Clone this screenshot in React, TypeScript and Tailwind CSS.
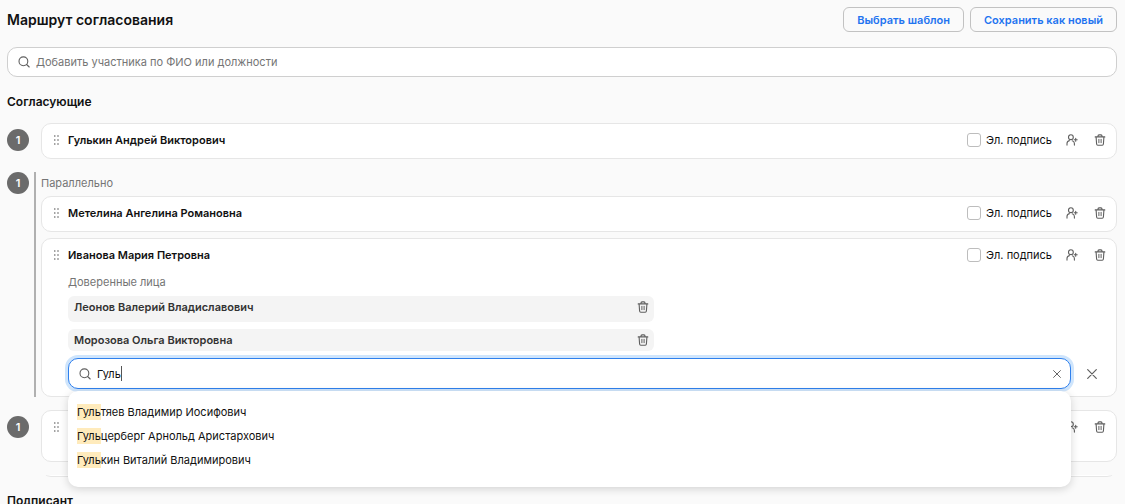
import { useState } from "react";
import type { ReactNode } from "react";

const delegates = ["Леонов Валерий Владиславович", "Морозова Ольга Викторовна"];

const people = [
  "Гультяев Владимир Иосифович",
  "Гульцерберг Арнольд Аристархович",
  "Гулькин Виталий Владимирович",
];

function SearchIcon() {
  return (
    <svg aria-hidden="true" className="h-3 w-3 shrink-0" fill="none" stroke="#5f5f5f" strokeLinecap="round" strokeWidth="1.1" viewBox="0 0 12 12">
      <circle cx="5.4" cy="5.3" r="4.4" />
      <path d="M8.6 8.5 11.2 11" />
    </svg>
  );
}

function TrashIcon() {
  return (
    <svg aria-hidden="true" className="h-3 w-3" fill="none" stroke="#5f5f5f" strokeLinecap="round" strokeLinejoin="round" strokeWidth="1.1" viewBox="0 0 12 12">
      <path d="M1.2 2.9h9.6M4 2.7V1.9Q4 .9 5 .9h2q1 0 1 1v.8M2.1 3.1l.5 6.9q.1 1.2 1.2 1.2h4.4q1.1 0 1.2-1.2l.5-6.9" />
      <path d="M4.9 5.3v3.4M7.1 5.3v3.4" strokeWidth="1" />
    </svg>
  );
}

function UserPlusIcon() {
  return (
    <svg aria-hidden="true" className="h-3 w-3" fill="none" stroke="#5f5f5f" strokeLinecap="round" strokeLinejoin="round" strokeWidth="1.1" viewBox="0 0 12 12">
      <circle cx="4.9" cy="3.2" r="2.4" />
      <path d="M1 11.1V9.5Q1 7.1 3.4 6.6M6.3 6.8Q8.4 7.4 8.4 9.5v1.6M8.2 5.8h3M9.7 4.3v3" />
    </svg>
  );
}

function CrossIcon({ className }: { className: string }) {
  return (
    <svg aria-hidden="true" className={className} fill="none" stroke="#5f5f5f" strokeLinecap="round" strokeWidth="1.2" viewBox="0 0 10 10">
      <path d="m.7.7 8.6 8.6M9.3.7.7 9.3" />
    </svg>
  );
}

function DragHandle() {
  return (
    <svg aria-hidden="true" className="h-[10px] w-[5px] shrink-0" fill="#5f5f5f" viewBox="0 0 5 10">
      {[1, 5, 9].map((y) => (
        <g key={y}>
          <circle cx="0.8" cy={y} r="0.8" />
          <circle cx="4" cy={y} r="0.8" />
        </g>
      ))}
    </svg>
  );
}

function StepBadge({ children }: { children: ReactNode }) {
  return (
    <span className="grid h-[22px] w-[22px] shrink-0 place-items-center rounded-full bg-[#6b6b6b] text-[11px] font-semibold text-white">
      {children}
    </span>
  );
}

function ParticipantCard({ name, children }: { name?: string; children?: ReactNode }) {
  return (
    <article className="min-w-0 flex-1 rounded-[10px] border border-[#e6e6e6] bg-white pb-[2px]">
      <div className="flex h-8 items-center pl-3 pr-[10px]">
        <DragHandle />
        <h3 className="ml-[9px] flex-1 text-[11px] font-semibold">{name}</h3>
        <label className="flex items-center gap-[5px]">
          <input className="h-[14px] w-[14px] appearance-none rounded-[3px] border border-[#bdbdbd] bg-white checked:bg-[#1f74f0]" type="checkbox" />
          Эл. подпись
        </label>
        <button aria-label="Добавить доверенное лицо" className="ml-[14px]" type="button">
          <UserPlusIcon />
        </button>
        <button aria-label="Удалить участника" className="ml-4" type="button">
          <TrashIcon />
        </button>
      </div>
      {children}
    </article>
  );
}

function DelegateSearch() {
  const [query, setQuery] = useState("Гуль");
  const matches = people.filter((person) => query !== "" && person.startsWith(query));

  return (
    <div className="mt-[7px] flex items-center">
      <div className="relative min-w-0 flex-1">
        <div className="flex h-[31px] items-center rounded-[10px] border border-[#2f80ed] bg-white pl-[10px] pr-[9px] ring-3 ring-[#cfe5fc]">
          <label className="flex min-w-0 flex-1 cursor-text items-center">
            <SearchIcon />
            <input
              aria-label="Поиск доверенного лица"
              className="ml-[6px] field-sizing-content bg-transparent caret-transparent outline-none"
              onChange={(event) => setQuery(event.target.value)}
              type="text"
              value={query}
            />
            <span className="h-[15px] w-px bg-[#555555]" />
          </label>
          <button aria-label="Очистить" onClick={() => setQuery("")} type="button">
            <CrossIcon className="h-2 w-2" />
          </button>
        </div>
        {matches.length > 0 && (
          <ul className="absolute inset-x-0 top-full z-10 mt-[2px] rounded-[10px] bg-white px-[9px] pb-[15px] pt-[9px] shadow-[0_2px_8px_rgba(0,0,0,0.16)]">
            {matches.map((person) => (
              <li key={person}>
                <button className="flex h-6 w-full items-center text-left" onClick={() => setQuery(person)} type="button">
                  <span>
                    <mark className="bg-[#ffebbc] py-px text-inherit">{query}</mark>
                    {person.slice(query.length)}
                  </span>
                </button>
              </li>
            ))}
          </ul>
        )}
      </div>
      <button aria-label="Закрыть поиск" className="ml-4" type="button">
        <CrossIcon className="h-[10px] w-[10px]" />
      </button>
    </div>
  );
}

export default function App() {
  return (
    <main className="h-screen overflow-hidden bg-[#fafafa] pl-[7px] pr-2 pt-[7px] font-[Inter,sans-serif] text-[11px] leading-4 text-[#111111] antialiased">
      <header className="flex items-center justify-between">
        <h1 className="text-sm font-semibold">Маршрут согласования</h1>
        <div className="flex gap-[6px] font-semibold text-[#1f74f0]">
          <button className="h-[25px] rounded-md border border-[#c2c2c2] px-[13px]" type="button">Выбрать шаблон</button>
          <button className="h-[25px] rounded-md border border-[#c2c2c2] px-[13px]" type="button">Сохранить как новый</button>
        </div>
      </header>

      <label className="mt-[15px] flex h-[30px] items-center rounded-[10px] border border-[#cfcfcf] bg-white px-[10px]">
        <SearchIcon />
        <input
          aria-label="Добавить участника"
          className="ml-[6px] flex-1 bg-transparent outline-none placeholder:text-[#757575]"
          placeholder="Добавить участника по ФИО или должности"
          type="text"
        />
      </label>

      <h2 className="mb-[13px] mt-[17px] text-xs leading-4 font-semibold">Согласующие</h2>

      <div className="flex flex-col gap-[13px]">
        <section className="flex gap-3">
          <div className="flex h-[34px] items-center">
            <StepBadge>1</StepBadge>
          </div>
          <ParticipantCard name="Гулькин Андрей Викторович" />
        </section>

        <section className="flex">
          <StepBadge>1</StepBadge>
          <div className="ml-[5px] min-w-0 flex-1 border-l-2 border-[#b0b0b0] pl-[5px]">
            <p className="mb-[2px] leading-[22px] text-[#757575]">Параллельно</p>
            <div className="flex flex-col gap-[6px]">
              <ParticipantCard name="Метелина Ангелина Романовна" />
              <ParticipantCard name="Иванова Мария Петровна">
                <div className="pb-[5px] pl-[26px] pr-[19px]">
                  <p className="mb-[3px] leading-[22px] text-[#757575]">Доверенные лица</p>
                  <ul className="flex max-w-[586px] flex-col gap-[7px]">
                    {delegates.map((delegate) => (
                      <li className="rounded-md bg-[#f4f4f4] pb-1 pl-[6px] pr-[5px] last:pb-0" key={delegate}>
                        <div className="flex h-[22px] items-center justify-between">
                          <span className="font-semibold text-[#333333]">{delegate}</span>
                          <button aria-label="Удалить доверенное лицо" type="button">
                            <TrashIcon />
                          </button>
                        </div>
                      </li>
                    ))}
                  </ul>
                  <DelegateSearch />
                </div>
              </ParticipantCard>
            </div>
          </div>
        </section>

        <section className="flex gap-3">
          <div className="flex h-[34px] items-center">
            <StepBadge>1</StepBadge>
          </div>
          <ParticipantCard>
            <div className="h-4" />
          </ParticipantCard>
        </section>

        {/* lower edge of the next card, scrolled out of its list */}
        <div className="ml-[34px] flex h-[2px] items-end overflow-hidden">
          <div className="h-9 flex-1 shrink-0 rounded-[10px] border border-[#e6e6e6] bg-white" />
        </div>
      </div>

      <h2 className="mt-4 text-xs leading-4 font-semibold">Подписант</h2>
    </main>
  );
}
